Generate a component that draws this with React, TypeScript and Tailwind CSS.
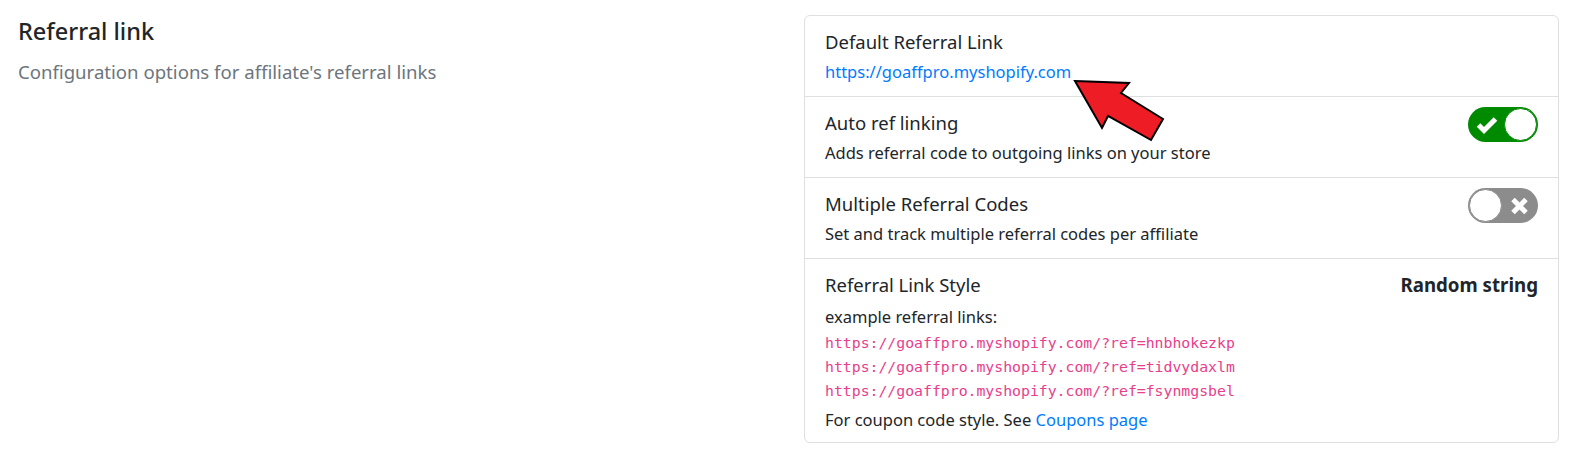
const sans = "font-['Noto_Sans','Liberation_Sans',sans-serif]";

const examples = [
  "https://goaffpro.myshopify.com/?ref=hnbhokezkp",
  "https://goaffpro.myshopify.com/?ref=tidvydaxlm",
  "https://goaffpro.myshopify.com/?ref=fsynmgsbel",
];

function Toggle({ on }: { on: boolean }) {
  if (on) {
    return (
      <div className="flex h-[35px] w-[70px] shrink-0 items-center justify-between rounded-full bg-[#008a00] pl-[8px] pr-px">
        <svg width="22" height="18" viewBox="0 0 22 18">
          <polyline points="2.5,9 8,14.5 19.5,3" fill="none" stroke="#fff" strokeWidth="5" />
        </svg>
        <div className="h-[33px] w-[33px] rounded-full border border-[#008a00] bg-white" />
      </div>
    );
  }
  return (
    <div className="flex h-[35px] w-[70px] shrink-0 items-center justify-between rounded-full bg-[#8c8c8c] pl-px pr-[9px]">
      <div className="h-[33px] w-[33px] rounded-full border border-[#8c8c8c] bg-white" />
      <svg width="19" height="18" viewBox="0 0 19 18">
        <path d="M3,2.5 L16,15.5 M16,2.5 L3,15.5" fill="none" stroke="#fff" strokeWidth="5" />
      </svg>
    </div>
  );
}

function ToggleRow({ title, text, on }: { title: string; text: string; on: boolean }) {
  return (
    <div className="flex items-start justify-between border-t border-[#dfdfdf] px-5 py-3">
      <div>
        <div className="text-[18.5px] leading-[27px]">{title}</div>
        <div className="mt-[5px] text-[16.5px] leading-[24px]">{text}</div>
      </div>
      <div className="-mt-[2px]">
        <Toggle on={on} />
      </div>
    </div>
  );
}

export default function App() {
  return (
    <div className={`relative flex h-[466px] w-[1575px] bg-white pl-[18px] pt-[15px] text-[#212529] ${sans}`}>
      <div className="w-[786px] shrink-0">
        <h2 className="mt-[2px] text-[23.5px] leading-[29px] font-medium">Referral link</h2>
        <p className="mt-[12px] text-[18.6px] leading-[27px] text-[#6c757d]">
          Configuration options for affiliate's referral links
        </p>
      </div>

      <div className="h-[428px] w-[755px] overflow-hidden rounded-md border border-[#dfdfdf]">
        <div className="px-5 py-3">
          <div className="text-[18.5px] leading-[27px]">Default Referral Link</div>
          <a className="mt-[5px] block text-[16.5px] leading-[24px] text-[#007bff]">
            https://goaffpro.myshopify.com
          </a>
        </div>

        <ToggleRow on title="Auto ref linking" text="Adds referral code to outgoing links on your store" />
        <ToggleRow
          on={false}
          title="Multiple Referral Codes"
          text="Set and track multiple referral codes per affiliate"
        />

        <div className="border-t border-[#dfdfdf] px-5 pt-3">
          <div className="flex items-start justify-between">
            <div className="text-[18.5px] leading-[27px]">Referral Link Style</div>
            <div className="text-[18.7px] leading-[27px] font-bold">Random string</div>
          </div>
          <div className="mt-[7px] text-[16.5px] leading-[24px]">example referral links:</div>
          <div className="mt-[2px] font-['DejaVu_Sans_Mono',monospace] text-[14.8px] leading-[24px] text-[#e83e8c]">
            {examples.map((e) => (
              <div key={e}>{e}</div>
            ))}
          </div>
          <div className="mt-[5px] text-[16.5px] leading-[24px]">
            For coupon code style. See <a className="text-[#007bff]">Coupons page</a>
          </div>
        </div>
      </div>

      <svg
        className="absolute left-[1070px] top-[76px]"
        width="100"
        height="70"
        viewBox="0 0 100 70"
      >
        <polygon
          points="5,5 59,7 51,17 93,43 81,64 38,40 32,52"
          fill="#ee1c25"
          stroke="#000"
          strokeWidth="2"
          strokeLinejoin="miter"
        />
      </svg>
    </div>
  );
}
